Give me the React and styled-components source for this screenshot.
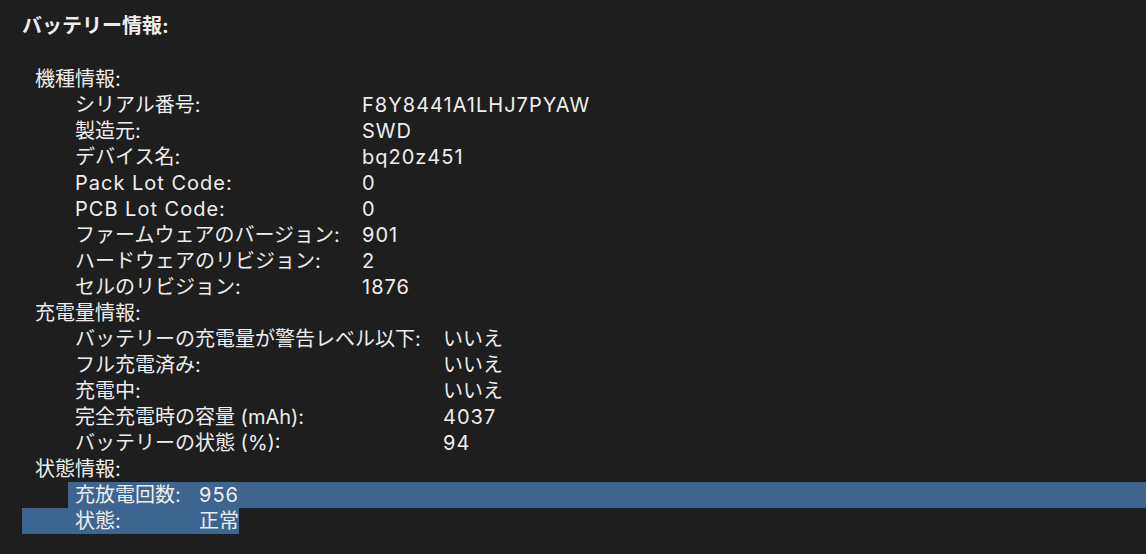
import React from 'react';
import styled, { createGlobalStyle } from 'styled-components';

const GlobalStyle = createGlobalStyle`
  html, body {
    margin: 0;
    padding: 0;
    background: #1e1e1e;
  }
  body {
    font-family: Inter, "Noto Sans CJK JP", sans-serif;
  }
`

const Page = styled.div`
  width: 1146px;
  height: 554px;
  box-sizing: border-box;
  padding: 13px 0 0 22px;
  background: #1e1e1e;
  color: #eeeeee;
  font-size: 20px;
  line-height: 26px;
  overflow: hidden;
`
const Title = styled.div`
  font-weight: 700;
  height: 26px;
  margin-bottom: 27px;
`
const SectionHeading = styled.div`
  height: 26px;
  padding-left: 13px;
`
const Row = styled.div`
  display: flex;
  height: 26px;
  padding-left: 53px;
  white-space: nowrap;

  ${({ $sel }) => $sel === 'tail' && `
    margin-left: 46px;
    padding-left: 7px;
    background: #3e6590;
  `}
  ${({ $sel }) => $sel === 'head' && `
    width: fit-content;
    background: #3e6590;
  `}
`
const Label = styled.span`
  flex: none;
  width: ${({ $width }) => $width}px;
  letter-spacing: ${({ $latin }) => ($latin ? '1px' : '0')};
`
const Value = styled.span`
  flex: none;
  letter-spacing: ${({ $latin }) => ($latin ? '1px' : '0')};
`

// system font on the reference is a bit wider than Inter for latin text
const isLatin = text => /^[\x00-\x7f]+$/.test(text);

const sections = [
  {
    title: '機種情報:',
    labelWidth: 287,
    rows: [
      ['シリアル番号:', 'F8Y8441A1LHJ7PYAW'],
      ['製造元:', 'SWD'],
      ['デバイス名:', 'bq20z451'],
      ['Pack Lot Code:', '0'],
      ['PCB Lot Code:', '0'],
      ['ファームウェアのバージョン:', '901'],
      ['ハードウェアのリビジョン:', '2'],
      ['セルのリビジョン:', '1876'],
    ],
  },
  {
    title: '充電量情報:',
    labelWidth: 368,
    rows: [
      ['バッテリーの充電量が警告レベル以下:', 'いいえ'],
      ['フル充電済み:', 'いいえ'],
      ['充電中:', 'いいえ'],
      ['完全充電時の容量 (mAh):', '4037'],
      ['バッテリーの状態 (%):', '94'],
    ],
  },
  {
    title: '状態情報:',
    labelWidth: 124,
    rows: [
      ['充放電回数:', '956', 'tail'],
      ['状態:', '正常', 'head'],
    ],
  },
];

export default function App() {
  return (
    <Page>
      <GlobalStyle />
      <Title>バッテリー情報:</Title>
      {sections.map(section => (
        <div key={section.title}>
          <SectionHeading>{section.title}</SectionHeading>
          {section.rows.map(([label, value, sel]) => (
            <Row key={label} $sel={sel}>
              <Label $width={section.labelWidth} $latin={isLatin(label)}>{label}</Label>
              <Value $latin={isLatin(value)}>{value}</Value>
            </Row>
          ))}
        </div>
      ))}
    </Page>
  );
}
